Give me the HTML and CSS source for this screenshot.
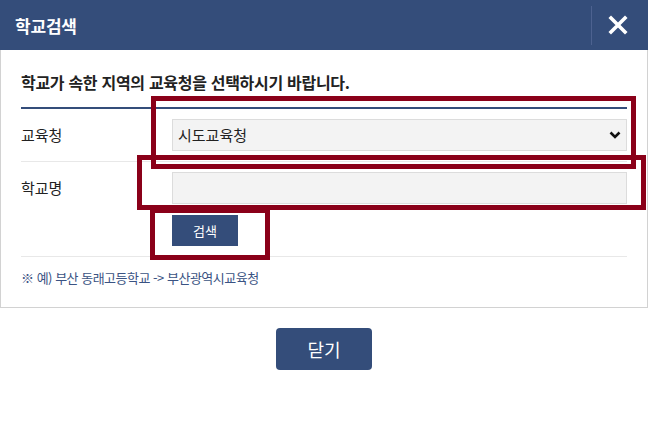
FILE: index.html
```html
<!DOCTYPE html>
<html lang="ko">
<head>
<meta charset="utf-8">
<title>학교검색</title>
<link rel="stylesheet" href="styles.css">
</head>
<body>
<div class="popup">
  <div class="header">
    <h1 class="header-title">학교검색</h1>
    <button class="header-close" type="button" aria-label="닫기">
      <svg width="20" height="20" viewBox="0 0 20 20"><path d="M3 3 L17 17 M17 3 L3 17" stroke="#fff" stroke-width="3.6" stroke-linecap="square" fill="none"/></svg>
    </button>
  </div>
  <div class="panel">
    <p class="guide">학교가 속한 지역의 교육청을 선택하시기 바랍니다.</p>
    <div class="form">
      <div class="row">
        <div class="label">교육청</div>
        <div class="field">
          <div class="select-wrap">
            <div class="select">시도교육청</div>
            <svg class="chevron" width="12" height="8" viewBox="0 0 12 8"><path d="M1.5 1.5 L6 6 L10.5 1.5" stroke="#111" stroke-width="2.6" fill="none"/></svg>
          </div>
        </div>
      </div>
      <div class="row row-last">
        <div class="label label-school">학교명</div>
        <div class="field">
          <div class="input"></div>
          <button class="search-btn" type="button">검색</button>
        </div>
      </div>
    </div>
    <p class="note">※ 예) 부산 동래고등학교 -&gt; 부산광역시교육청</p>
  </div>
  <div class="footer">
    <button class="close-btn" type="button">닫기</button>
  </div>
</div>
<div class="mark mark-1"></div>
<div class="mark mark-2"></div>
<div class="mark mark-3"></div>
</body>
</html>
```

FILE: styles.css
```css
* { box-sizing: border-box; }
html, body { margin: 0; padding: 0; background: #fff; }
body {
  font-family: "Noto Sans CJK KR", "Noto Sans", sans-serif;
  color: #222;
  width: 648px;
  height: 440px;
  overflow: hidden;
}
.popup { width: 648px; }
.header {
  height: 50px;
  background: #344d7a;
  display: flex;
  align-items: center;
  justify-content: space-between;
}
.header-title {
  margin: 0 0 0 15px;
  font-size: 17px;
  font-weight: 700;
  color: #fff;
  letter-spacing: -0.2px;
  line-height: 1;
}
.header-close {
  width: 57px;
  height: 39px;
  border: 0;
  border-left: 1px solid #4d6290;
  background: transparent;
  display: flex;
  align-items: center;
  justify-content: center;
  padding: 0 4px 0 0;
}
.panel {
  border: 1px solid #d2d2d2;
  border-top: 0;
  padding: 0 20px;
}
.guide {
  margin: 0;
  padding: 22px 0 0 0;
  height: 57px;
  font-size: 16px;
  font-weight: 700;
  letter-spacing: -0.3px;
  line-height: 20px;
  color: #222;
}
.form { border-top: 2px solid #344d7a; }
.row {
  display: flex;
  padding: 10px 0;
  border-bottom: 1px solid #e8e8e8;
}
.label {
  width: 151px;
  font-size: 15px;
  line-height: 32px;
  color: #222;
}
.field { flex: 1; display: flex; flex-direction: column; align-items: flex-start; }
.select-wrap { position: relative; width: 100%; }
.select, .input {
  width: 100%;
  height: 32px;
  background: #f3f3f3;
  border: 1px solid #dcdcdc;
  font-size: 15px;
  line-height: 30px;
  padding: 0 5px;
  color: #222;
}
.chevron { position: absolute; right: 6px; top: 12px; }
.search-btn {
  margin-top: 11px;
  width: 66px;
  height: 31px;
  background: #344d7a;
  color: #fff;
  border: 0;
  font-family: inherit;
  font-size: 13px;
  padding: 0;
}
.note {
  margin: 0;
  padding: 13px 0 0 0;
  height: 50px;
  font-size: 13px;
  line-height: 16px;
  color: #3a5383;
  letter-spacing: -0.5px;
}
.footer { display: flex; justify-content: center; padding-top: 20px; }
.close-btn {
  width: 96px;
  height: 42px;
  background: #344d7a;
  color: #fff;
  border: 0;
  border-radius: 4px;
  font-family: inherit;
  font-size: 18px;
  padding: 0;
}
.mark {
  position: absolute;
  border: 5px solid #8a0019;
  pointer-events: none;
}
.mark-1 { left: 151px; top: 96px; width: 485px; height: 73px; }
.mark-2 { left: 137px; top: 155px; width: 509px; height: 55px; }
.mark-3 { left: 150px; top: 208px; width: 120px; height: 52px; }
```
